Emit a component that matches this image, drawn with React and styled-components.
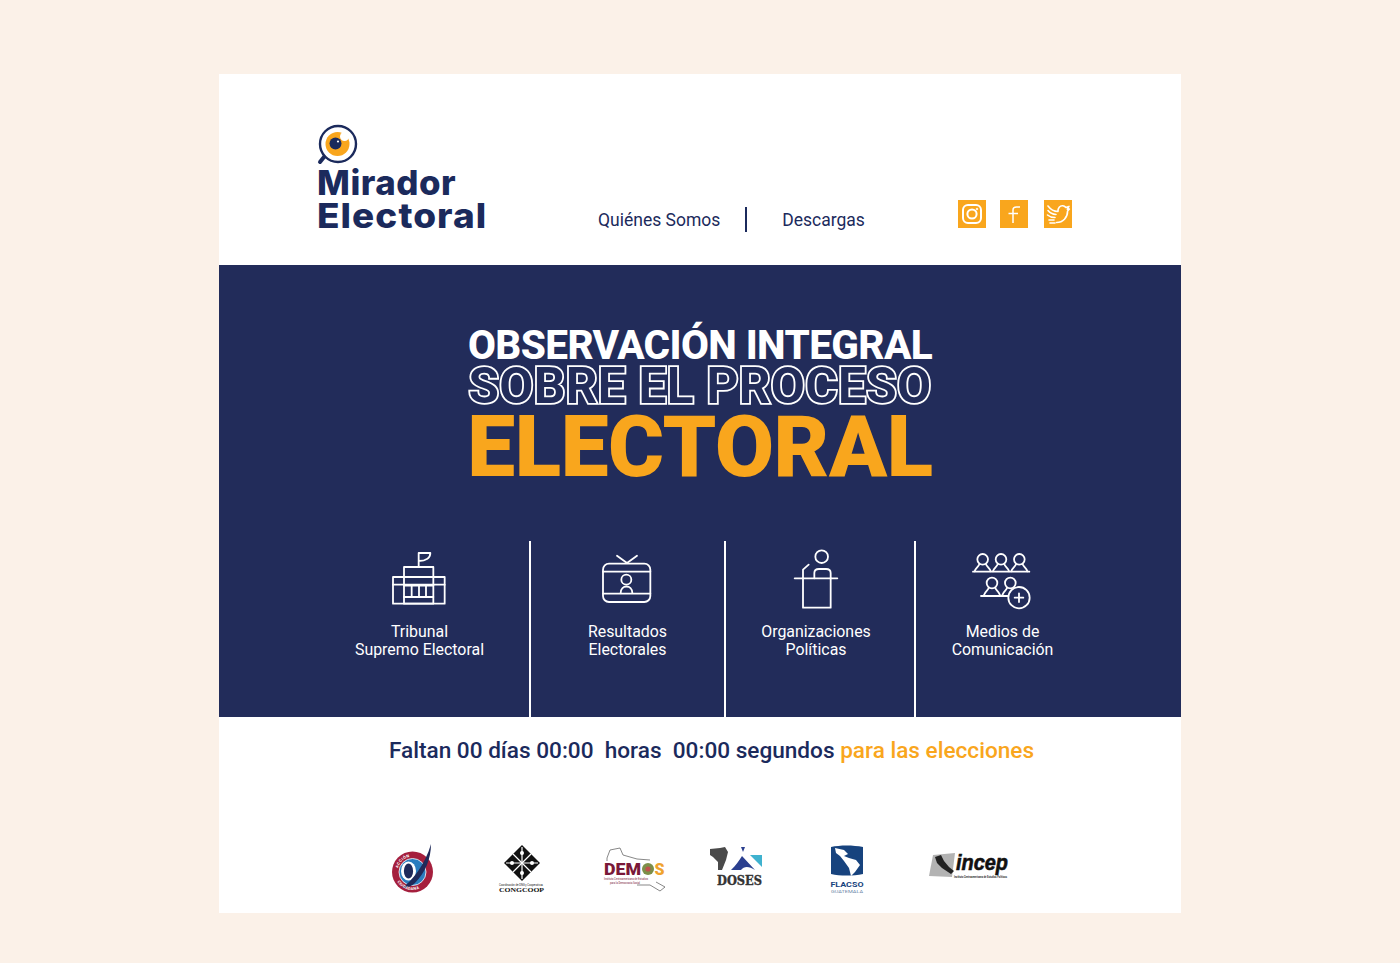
import React from "react";
import styled, { createGlobalStyle } from "styled-components";

const NAVY = "#222c5a";
const INK = "#1b2a5c";
const ORANGE = "#f9a61d";

const GlobalStyle = createGlobalStyle`
  html, body {
    margin: 0;
    padding: 0;
    background: #fbf1e8;
    font-family: Roboto, "Liberation Sans", sans-serif;
  }
`;

const Page = styled.div`
  width: 1400px;
  height: 963px;
  padding: 74px 219px 50px;
  box-sizing: border-box;
  overflow: hidden;
`;

const Card = styled.div`
  width: 962px;
  height: 839px;
  background: #fff;
  display: flex;
  flex-direction: column;
`;

const Header = styled.header`
  height: 191px;
  box-sizing: border-box;
  padding: 50px 0 0 98px;
  display: flex;
  align-items: flex-start;
`;

const Brand = styled.div`
  width: 281px;
  display: flex;
  flex-direction: column;
`;

const BrandMark = styled.svg`
  width: 42px;
  height: 41px;
  display: block;
  margin-bottom: 1px;
`;

const BrandLine = styled.div`
  font-family: Inter, sans-serif;
  font-weight: 800;
  font-size: 34.5px;
  line-height: 33px;
  color: ${INK};
  white-space: nowrap;
  letter-spacing: ${(p) => p.$tracking}px;
  transform: scaleX(${(p) => p.$stretch});
  transform-origin: left center;
`;

const Nav = styled.nav`
  display: flex;
  align-items: center;
  width: 360px;
  height: 27px;
  margin-top: 82px;
  color: ${INK};
  font-size: 17.5px;
`;

const NavDivider = styled.span`
  width: 2px;
  height: 25px;
  background: ${INK};
  margin: 0 35px 0 25px;
`;

const Socials = styled.div`
  display: flex;
  margin-top: 76px;
`;

const SocialBox = styled.div`
  width: 28px;
  height: 28px;
  background: ${ORANGE};
  display: flex;
  align-items: center;
  justify-content: center;
  margin-right: ${(p) => p.$gap || 0}px;
`;

const Hero = styled.section`
  height: 452px;
  background: ${NAVY};
  display: flex;
  flex-direction: column;
`;

const Headline = styled.h1`
  margin: 0;
  padding-top: 58px;
  height: 219px;
  box-sizing: border-box;
  display: flex;
  flex-direction: column;
  align-items: center;
  font-weight: 700;
`;

const LineOne = styled.span`
  font-size: 40.5px;
  line-height: 44px;
  font-weight: 800;
  letter-spacing: -0.6px;
  color: #fff;
`;

const LineTwo = styled.span`
  font-size: 49.5px;
  line-height: 38px;
  color: ${NAVY};
  -webkit-text-stroke: 3.6px #fff;
  paint-order: stroke fill;
  letter-spacing: 0.35px;
`;

const LineThree = styled.span`
  font-size: 85.5px;
  line-height: 84px;
  color: ${ORANGE};
  font-weight: 900;
  letter-spacing: -0.4px;
`;

const Services = styled.div`
  display: grid;
  grid-template-columns: 221px 195px 190px 173px;
  margin-left: 91px;
  height: 176px;
  margin-top: 57px;
`;

const Service = styled.div`
  display: flex;
  flex-direction: column;
  align-items: center;
  box-sizing: border-box;
  padding-top: 10px;
  padding-right: ${(p) => p.$shift || 0}px;
  border-right: ${(p) => (p.$last ? "none" : "2px solid #fff")};
`;

const ServiceIcon = styled.svg`
  height: 60px;
  width: 66px;
  display: block;
  overflow: visible;
  fill: none;
  stroke: #fff;
  stroke-width: 5.4;
  stroke-linecap: round;
  stroke-linejoin: round;
`;

const ServiceLabel = styled.div`
  color: #fff;
  font-size: 15.9px;
  line-height: 18.3px;
  text-align: center;
  margin-top: 12px;
`;

const Countdown = styled.p`
  margin: 20px 0 0;
  padding-left: 23px;
  text-align: center;
  font-size: 22.6px;
  line-height: 28px;
  font-weight: 500;
  color: ${INK};
  white-space: pre;
`;

const Accent = styled.span`
  color: ${ORANGE};
`;

const Partners = styled.div`
  display: flex;
  align-items: flex-start;
  padding-left: 173px;
  margin-top: 80px;
`;

const PartnerLogo = styled.svg`
  display: block;
  flex: none;
  overflow: visible;
  margin-right: ${(p) => p.$gap || 0}px;
  margin-top: ${(p) => p.$top || 0}px;
`;

const BrandIcon = () => (
  <BrandMark viewBox="0 0 42 41">
    <circle cx="21" cy="20" r="18" fill="#fff" stroke={INK} strokeWidth="2.4" />
    <path d="M7 33 L3 38" stroke={INK} strokeWidth="4" strokeLinecap="round" />
    <circle cx="20.5" cy="20" r="12" fill={ORANGE} />
    <circle cx="27.5" cy="12.5" r="4.5" fill="#fff" />
    <circle cx="18.5" cy="19.5" r="6" fill={INK} />
    <circle cx="21" cy="17.5" r="1.1" fill="#fff" />
  </BrandMark>
);

const InstagramIcon = () => (
  <svg width="24" height="24" viewBox="0 0 24 24" fill="none" stroke="#fff" strokeWidth="2">
    <rect x="3" y="3" width="18" height="18" rx="5" />
    <circle cx="12" cy="12" r="4.6" />
    <circle cx="17" cy="7" r="0.8" fill="#fff" strokeWidth="0.8" />
  </svg>
);

const FacebookIcon = () => (
  <svg width="28" height="28" viewBox="0 0 28 28" fill="none" stroke="#fff" strokeWidth="1.5">
    <path d="M20 7 H16.5 C14.5 7 13 8.2 13 10 V23" />
    <path d="M8.5 13.5 H18" />
  </svg>
);

const TwitterIcon = () => (
  <svg width="26" height="26" viewBox="0 0 26 26" fill="none" stroke="#fff" strokeWidth="1.6" strokeLinecap="round" strokeLinejoin="round">
    <path d="M3 5 C6 9 10 10.5 13 10.5 C12.6 7 15 4.5 17.8 4.8 C19.2 5 20 5.6 20.8 6.4 L24 5.4 L22.3 8.2 L24.4 8 L22.6 10 C22.6 16.5 18 21.5 11.5 21.5" />
    <path d="M3 9.5 C5 12 8 13.3 11 13.5" />
    <path d="M2.5 14 C4.5 15.8 7 16.5 10 16.5" />
    <path d="M4 19 L9 19" />
    <path d="M5 22 L10 22" />
  </svg>
);

const TribunalIcon = () => (
  <ServiceIcon viewBox="50 32 198 180">
    <rect x="68" y="110" width="155" height="80" />
    <rect x="101" y="80" width="88" height="110" />
    <path d="M68 133 H223 M101 170 H189 M101 136 H189" />
    <path d="M124 136 V170 M146 136 V170 M167 136 V170" />
    <path d="M145 80 V38 H180 C180 52 168 62 145 62" />
  </ServiceIcon>
);

const ResultsIcon = () => (
  <ServiceIcon viewBox="674 32 198 180">
    <rect x="698" y="70" width="142" height="115" rx="18" />
    <path d="M698 94 H840 M698 160 H840" />
    <path d="M740 46 L770 68 L800 46" />
    <circle cx="768" cy="118" r="15" />
    <path d="M751 158 C751 132 786 132 786 158" />
  </ServiceIcon>
);

const PartiesIcon = () => (
  <ServiceIcon viewBox="37 30 198 180">
    <circle cx="153" cy="47" r="19" />
    <path d="M131 112 V96 Q131 84 145 84 H166 Q180 84 180 96 V112" />
    <path d="M72 112 H200" />
    <path d="M97 112 V200 H180 V112" />
    <path d="M97 112 V86 L114 71" />
  </ServiceIcon>
);

const Person = ({ x, y }) => (
  <>
    <circle cx={x} cy={y} r="16" />
    <path d={`M${x - 24} ${y + 36} C${x - 20} ${y + 24} ${x - 12} ${y + 22} ${x - 10} ${y + 15} M${x + 10} ${y + 15} C${x + 12} ${y + 22} ${x + 20} ${y + 24} ${x + 24} ${y + 36}`} />
  </>
);

const MediaIcon = () => (
  <ServiceIcon viewBox="599 33 198 180">
    <Person x={637} y={58} />
    <Person x={692} y={58} />
    <Person x={747} y={58} />
    <path d="M608 95 H777" />
    <Person x={665} y={129} />
    <Person x={720} y={129} />
    <path d="M632 168 H715" />
    <circle cx="746" cy="173" r="32" fill={NAVY} />
    <path d="M746 160 V186 M733 173 H759" />
  </ServiceIcon>
);

const AccionLogo = ({ gap }) => (
  <PartnerLogo $gap={gap} width="42" height="50" viewBox="0 0 42 50">
    <defs>
      <path id="accionTop" d="M5.5 27 A15.5 15.5 0 0 1 36.5 27" />
      <path id="accionBottom" d="M2.5 27 A18 18 0 0 0 38.5 27" />
    </defs>
    <circle cx="20.5" cy="27" r="20.5" fill="#a51f3d" />
    <circle cx="20.5" cy="27" r="13.5" fill="#2a7dbf" stroke="#fff" strokeWidth="0.8" />
    <ellipse cx="16.5" cy="26" rx="7.5" ry="9.5" fill="#fff" />
    <ellipse cx="16.5" cy="26" rx="4.6" ry="7.4" fill="#1f2a5a" />
    <path d="M39 -1 C39 14 33 28 23 38 C20 41 15 43 10 43 C20 36 33 20 39 -1 Z" fill="#1f2a5a" />
    <text fontFamily="Roboto, sans-serif" fontSize="4" fontWeight="700" fill="#fff" letterSpacing="0.4">
      <textPath href="#accionTop" startOffset="8%">ACCIÓN</textPath>
    </text>
    <text fontFamily="Roboto, sans-serif" fontSize="4" fontWeight="700" fill="#fff" letterSpacing="0.3">
      <textPath href="#accionBottom" startOffset="18%">CIUDADANA</textPath>
    </text>
  </PartnerLogo>
);

const CongcoopLogo = ({ gap }) => (
  <PartnerLogo $gap={gap} width="46" height="48" viewBox="0 0 46 48">
    <path d="M23 0 L41 18 L23 36 L5 18 Z" fill="#111" />
    <path d="M23 2 V34 M7 18 H39" stroke="#fff" strokeWidth="1.2" />
    <path d="M14 9 L32 27 M32 9 L14 27" stroke="#fff" strokeWidth="1.2" />
    <circle cx="23" cy="8" r="2" fill="#fff" />
    <circle cx="23" cy="28" r="2" fill="#fff" />
    <circle cx="13" cy="18" r="2" fill="#fff" />
    <circle cx="33" cy="18" r="2" fill="#fff" />
    <text x="0" y="40.5" textLength="44" lengthAdjust="spacingAndGlyphs" fontFamily="Roboto, sans-serif" fontSize="3" fill="#222">Coordinación de ONG y Cooperativas</text>
    <text x="0" y="46.5" textLength="45" lengthAdjust="spacingAndGlyphs" fontFamily="Liberation Serif, serif" fontSize="7" fontWeight="700" fill="#111">CONGCOOP</text>
  </PartnerLogo>
);

const DemosLogo = ({ gap }) => (
  <PartnerLogo $gap={gap} width="62" height="48" viewBox="0 0 62 48">
    <path d="M4 16 L4 13 L7 5 L12 4 L17 3 L20 10 L27 12 L34 14 L47 15" fill="none" stroke="#555" strokeWidth="0.7" />
    <path d="M34 40 L47 40 L57 46 L62 42 L53 37" fill="none" stroke="#555" strokeWidth="0.7" />
    <text x="1" y="30" textLength="37" lengthAdjust="spacingAndGlyphs" fontFamily="Roboto, sans-serif" fontSize="17" fontWeight="900" fill="#7a1838">DEM</text>
    <circle cx="45" cy="24" r="6" fill="#7c8f4a" />
    <circle cx="45" cy="24" r="2.6" fill="#c0504d" />
    <text x="51.5" y="30" textLength="10" lengthAdjust="spacingAndGlyphs" fontFamily="Roboto, sans-serif" fontSize="17" fontWeight="900" fill="#f0a32d">S</text>
    <text x="1" y="34.5" textLength="44" lengthAdjust="spacingAndGlyphs" fontFamily="Roboto, sans-serif" fontSize="3.2" fill="#7a1838">Instituto Centroamericano de Estudios</text>
    <text x="7" y="38.5" textLength="30" lengthAdjust="spacingAndGlyphs" fontFamily="Roboto, sans-serif" fontSize="3.2" fill="#7a1838">para la Democracia Social</text>
  </PartnerLogo>
);

const DosesLogo = ({ gap }) => (
  <PartnerLogo $gap={gap} width="53" height="48" viewBox="0 0 53 48">
    <path d="M0 4 L10 3 L15 2 L18 7 L16 15 L12 25 L8 25 L8 17 L3 12 L0 10 Z" fill="#4a4a4a" />
    <path d="M31 2 H35 L33 7 Z" fill="#2b3f8f" />
    <path d="M32 11 L45 25 C39 21 34 21 31 25 H21 C26 20 29 16 32 11 Z" fill="#2b3f8f" />
    <path d="M40 10 H52 V22 L45 15 Z" fill="#3fb2cf" />
    <text x="7" y="39.5" textLength="45" lengthAdjust="spacingAndGlyphs" fontFamily="DejaVu Serif, serif" fontSize="13" fontWeight="700" fill="#333" stroke="#333" strokeWidth="0.4">DOSES</text>
  </PartnerLogo>
);

const FlacsoLogo = ({ gap }) => (
  <PartnerLogo $gap={gap} width="34" height="49" viewBox="0 0 34 49">
    <path d="M1 2 C10 0 23 0 33 2 V29 C23 31 10 31 1 29 Z" fill="#17437e" />
    <path d="M5 3 L14 5 L18 9 L14 11 L19 13 L26 15 L30 20 L25 27 L21 31 L19 23 L14 16 L10 11 L6 8 Z" fill="#fff" />
    <text x="0.5" y="42" textLength="33" lengthAdjust="spacingAndGlyphs" fontFamily="Roboto, sans-serif" fontSize="7.4" fontWeight="700" fill="#17437e">FLACSO</text>
    <text x="1" y="48" textLength="32" lengthAdjust="spacingAndGlyphs" fontFamily="Roboto, sans-serif" fontSize="4" fill="#6c86a8">GUATEMALA</text>
  </PartnerLogo>
);

const IncepLogo = () => (
  <PartnerLogo $top={7} width="80" height="28" viewBox="0 0 80 28">
    <path d="M0 24 L4 3 L26 1 L23 25 Z" fill="#b3b3b3" />
    <path d="M6 5 L12 3 L15 9 L20 15 L25 19 L22 22 L13 16 L8 11 Z" fill="#222" />
    <text x="27" y="18" textLength="52" lengthAdjust="spacingAndGlyphs" fontFamily="Liberation Sans, sans-serif" fontSize="22" fontWeight="700" fontStyle="italic" fill="#111" stroke="#111" strokeWidth="0.6">incep</text>
    <text x="25" y="26" textLength="53" lengthAdjust="spacingAndGlyphs" fontFamily="Roboto, sans-serif" fontSize="3" fontWeight="700" fill="#333">Instituto Centroamericano de Estudios Políticos</text>
  </PartnerLogo>
);

const App = () => (
  <Page>
    <GlobalStyle />
    <Card>
      <Header>
        <Brand>
          <BrandIcon />
          <BrandLine $tracking={0.5} $stretch={1.01}>Mirador</BrandLine>
          <BrandLine $tracking={1} $stretch={1.07}>Electoral</BrandLine>
        </Brand>
        <Nav>
          <span>Quiénes Somos</span>
          <NavDivider />
          <span>Descargas</span>
        </Nav>
        <Socials>
          <SocialBox $gap={14}><InstagramIcon /></SocialBox>
          <SocialBox $gap={16}><FacebookIcon /></SocialBox>
          <SocialBox><TwitterIcon /></SocialBox>
        </Socials>
      </Header>
      <Hero>
        <Headline>
          <LineOne>OBSERVACIÓN INTEGRAL</LineOne>
          <LineTwo>SOBRE EL PROCESO</LineTwo>
          <LineThree>ELECTORAL</LineThree>
        </Headline>
        <Services>
          <Service>
            <TribunalIcon />
            <ServiceLabel>Tribunal<br />Supremo Electoral</ServiceLabel>
          </Service>
          <Service>
            <ResultsIcon />
            <ServiceLabel>Resultados<br />Electorales</ServiceLabel>
          </Service>
          <Service $shift={8}>
            <PartiesIcon />
            <ServiceLabel>Organizaciones<br />Políticas</ServiceLabel>
          </Service>
          <Service $last>
            <MediaIcon />
            <ServiceLabel>Medios de<br />Comunicación</ServiceLabel>
          </Service>
        </Services>
      </Hero>
      <Countdown>
        {"Faltan 00 días 00:00  horas  00:00 segundos "}
        <Accent>para las elecciones</Accent>
      </Countdown>
      <Partners>
        <AccionLogo gap={65} />
        <CongcoopLogo gap={58} />
        <DemosLogo gap={45} />
        <DosesLogo gap={67} />
        <FlacsoLogo gap={65} />
        <IncepLogo />
      </Partners>
    </Card>
  </Page>
);

export default App;
